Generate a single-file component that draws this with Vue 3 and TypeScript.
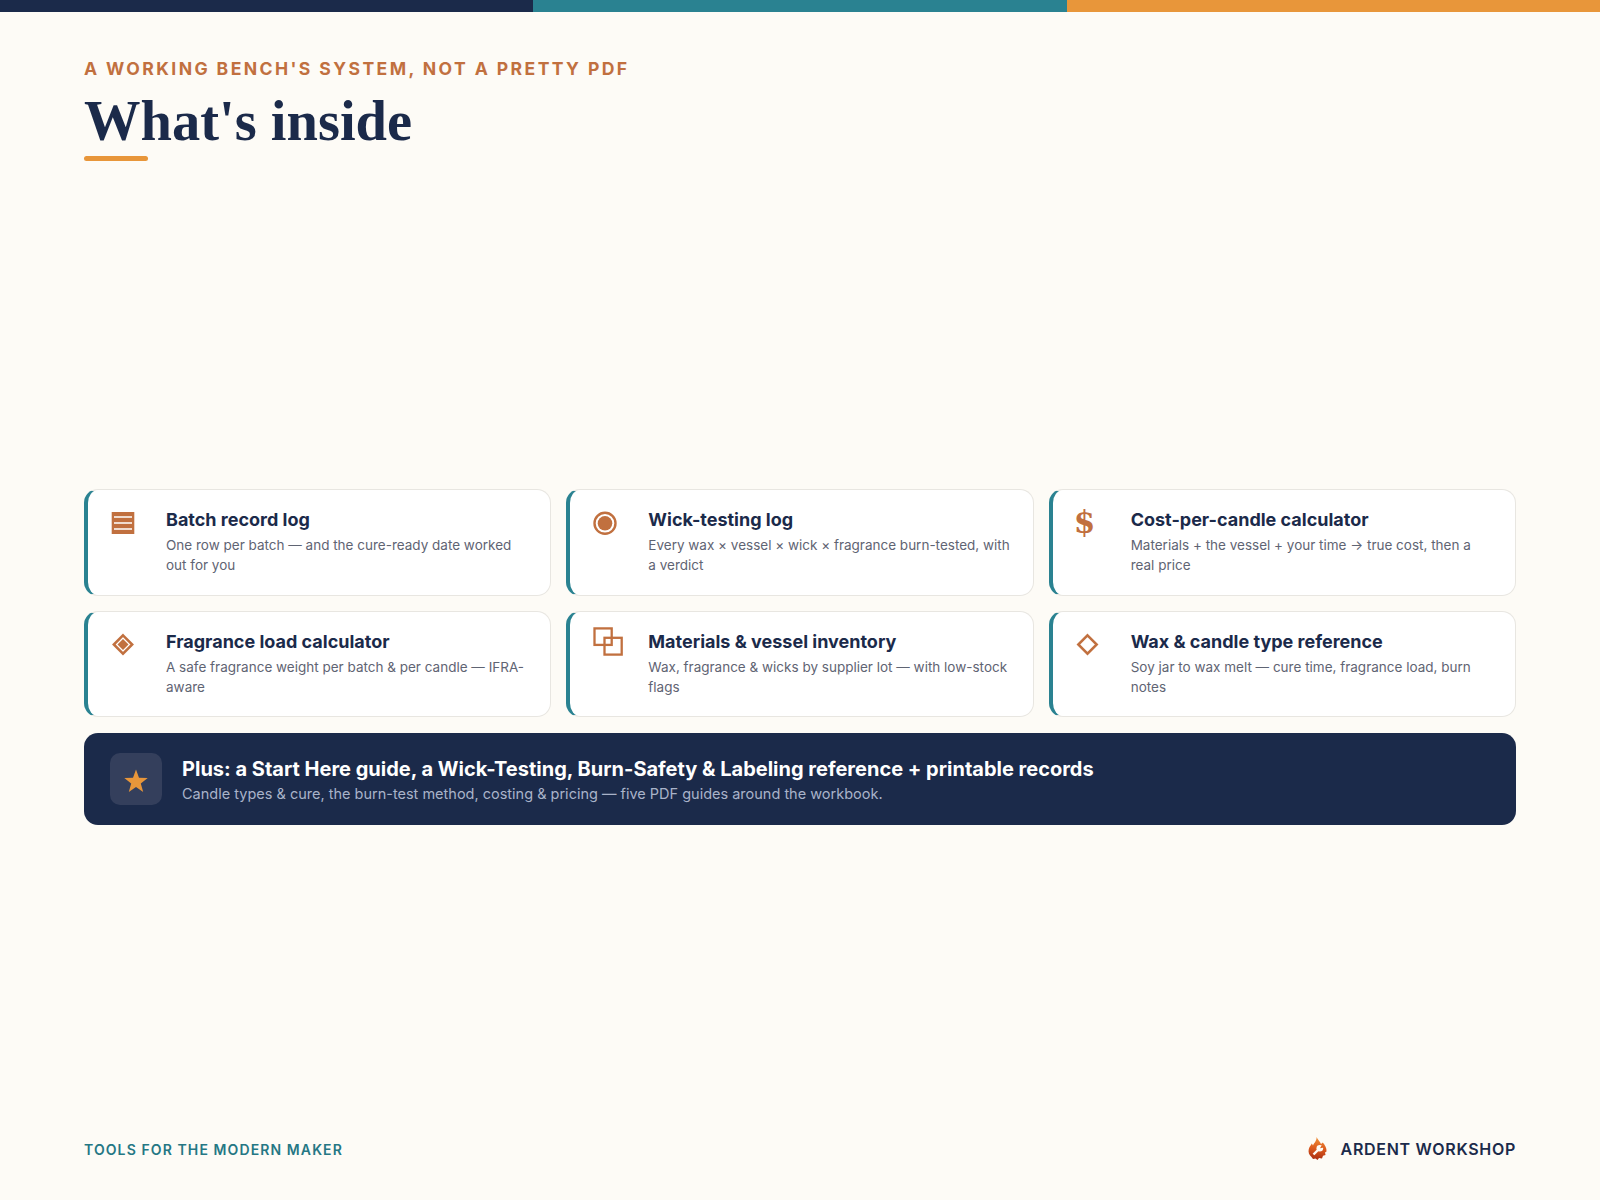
<script setup lang="ts">
interface Feature {
  icon: string
  title: string
  desc: string
}

const features: Feature[] = [
  { icon: 'rows', title: 'Batch record log', desc: 'One row per batch — and the cure-ready date worked out for you' },
  { icon: 'target', title: 'Wick-testing log', desc: 'Every wax × vessel × wick × fragrance burn-tested, with a verdict' },
  { icon: 'dollar', title: 'Cost-per-candle calculator', desc: 'Materials + the vessel + your time → true cost, then a real price' },
  { icon: 'gem', title: 'Fragrance load calculator', desc: 'A safe fragrance weight per batch & per candle — IFRA-aware' },
  { icon: 'squares', title: 'Materials & vessel inventory', desc: 'Wax, fragrance & wicks by supplier lot — with low-stock flags' },
  { icon: 'diamond', title: 'Wax & candle type reference', desc: 'Soy jar to wax melt — cure time, fragrance load, burn notes' },
]
</script>

<template>
  <div class="page">
    <div class="stripe">
      <span class="navy"></span>
      <span class="teal"></span>
      <span class="orange"></span>
    </div>

    <header class="head">
      <p class="eyebrow">A WORKING BENCH'S SYSTEM, NOT A PRETTY PDF</p>
      <h1 class="title">What's inside</h1>
      <div class="rule"></div>
    </header>

    <main class="body">
      <div class="grid">
        <div v-for="f in features" :key="f.title" class="card">
          <div class="icon">
            <span v-if="f.icon === 'dollar'" class="dollar">$</span>
            <svg v-else viewBox="0 0 34 34" width="34" height="34" class="icon-svg">
              <g v-if="f.icon === 'rows'">
                <rect x="1.700" y="8" width="22.600" height="22" fill="#c1703f" />
                <path d="M4 13h18M4 19h18M4 25h18" stroke="#fff" stroke-width="1.500" />
              </g>
              <g v-else-if="f.icon === 'target'">
                <circle cx="13" cy="19.300" r="10.500" fill="none" stroke="#c1703f" stroke-width="2.400" />
                <circle cx="13" cy="19.300" r="7.300" fill="#c1703f" />
              </g>
              <g v-else-if="f.icon === 'gem'">
                <path d="M13 9.300 22.200 18.500 13 27.700 3.800 18.500Z" fill="none" stroke="#c1703f" stroke-width="2.500" />
                <path d="M13 13 18.500 18.500 13 24 7.500 18.500Z" fill="#c1703f" />
              </g>
              <g v-else-if="f.icon === 'squares'" fill="none" stroke="#c1703f" stroke-width="2.300">
                <rect x="2.500" y="2.400" width="17.200" height="16.500" />
                <rect x="12.500" y="11.800" width="17.200" height="16.800" />
              </g>
              <path
                v-else
                d="M12.500 9.300 21.700 18.500 12.500 27.700 3.300 18.500Z"
                fill="none"
                stroke="#c1703f"
                stroke-width="2.500"
              />
            </svg>
          </div>
          <div>
            <h3 class="card-title">{{ f.title }}</h3>
            <p class="card-desc">{{ f.desc }}</p>
          </div>
        </div>
      </div>

      <div class="plus">
        <div class="plus-icon">
          <svg viewBox="0 0 24 24" width="24" height="24">
            <path fill="#e8963a" d="M12 .5 15 8.800 23.700 9 16.800 14.400 19.200 23 12 18 4.800 23 7.200 14.400.3 9 9 8.800Z" />
          </svg>
        </div>
        <div class="plus-text">
          <div class="plus-title">Plus: a Start Here guide, a Wick-Testing, Burn-Safety &amp; Labeling reference + printable records</div>
          <div class="plus-desc">Candle types &amp; cure, the burn-test method, costing &amp; pricing — five PDF guides around the workbook.</div>
        </div>
      </div>
    </main>

    <footer class="foot">
      <span class="tagline">TOOLS FOR THE MODERN MAKER</span>
      <span class="brand">
        <svg class="logo" viewBox="0 0 19 23" width="19" height="23">
          <defs>
            <linearGradient id="flame" x1="0.500" y1="0" x2="0.400" y2="1">
              <stop offset="0" stop-color="#f0923a" />
              <stop offset="0.500" stop-color="#dc5a1e" />
              <stop offset="1" stop-color="#a82c12" />
            </linearGradient>
          </defs>
          <path
            fill="url(#flame)"
            d="M8.500 0C10 3 12 4.500 13 7L14.800 5.500C17 8 18.800 11 18.500 14.500L17 15.500 17.500 18 15 18.800 14 21.500 11 21 9.500 23 7.500 21.500 5 22 3.500 20C1 18 0 15 .8 12 1.500 9.500 3 8.500 3.800 6.500L5 8.500C6 6 9 3.500 8.500 0Z"
          />
          <path d="M5.500 17.500 10.500 12.500" stroke="#fdfbf6" stroke-width="2.400" fill="none" />
          <circle cx="11.800" cy="11.200" r="3.300" fill="#fdfbf6" />
          <path d="M12 11.200 14 7.800 16 10.500Z" fill="#e0641f" />
        </svg>
        ARDENT WORKSHOP
      </span>
    </footer>
  </div>
</template>

<style>
html, body { margin: 0; background: #fdfbf6; }
</style>

<style scoped>
.page {
  height: 1200px;
  display: flex;
  flex-direction: column;
  background: #fdfbf6;
  font-family: Inter, "Liberation Sans", sans-serif;
  box-sizing: border-box;
}

.stripe { display: flex; height: 12px; flex-shrink: 0; }
.stripe span { flex: 1; }
.navy { background: #1b2a4a; }
.teal { background: #2a8291; }
.orange { background: #e8963a; }

.head { padding: 44px 84px 0; }
.eyebrow {
  margin: 0;
  font-size: 17.600px;
  line-height: 26px;
  font-weight: 700;
  letter-spacing: 2.400px;
  color: #c1703f;
}
.title {
  margin: 5px 0 0;
  font-family: "Liberation Serif", serif;
  font-size: 56.500px;
  line-height: 68px;
  font-weight: 700;
  color: #1b2a4a;
}
.rule {
  width: 64px;
  height: 5px;
  margin-top: 1px;
  border-radius: 3px;
  background: #e8963a;
}

.body {
  flex: 1;
  padding: 16px 84px 0;
  display: flex;
  flex-direction: column;
  justify-content: center;
  gap: 16px;
}

.grid {
  display: grid;
  grid-template-columns: repeat(3, 1fr);
  grid-template-rows: 107px 106px;
  gap: 15px;
}
.card {
  display: flex;
  gap: 12px;
  padding: 18px 22px 0;
  background: #fff;
  border: 1px solid #e8e6e1;
  border-left: 4px solid #2a8291;
  border-radius: 14px;
}
.icon {
  width: 44px;
  flex-shrink: 0;
  color: #c1703f;
}
.icon-svg {
  display: block;
  margin-top: -4px;
  overflow: visible;
}
.dollar {
  display: block;
  margin: -1px 0 0 -1px;
  font-family: "DejaVu Serif", serif;
  font-size: 31px;
  line-height: 30px;
  font-weight: 700;
}
.card-title {
  margin: 0;
  font-size: 18px;
  line-height: 24px;
  font-weight: 700;
  color: #1b2a4a;
}
.card-desc {
  margin: 3px 0 0;
  font-size: 13.500px;
  line-height: 20px;
  color: #5f6473;
}

.plus {
  display: flex;
  align-items: center;
  gap: 20px;
  height: 92px;
  padding: 0 26px;
  box-sizing: border-box;
  background: #1b2a4a;
  border-radius: 14px;
}
.plus-icon {
  width: 52px;
  height: 52px;
  padding-top: 4px;
  box-sizing: border-box;
  border-radius: 10px;
  display: flex;
  align-items: center;
  justify-content: center;
  background: #343f5c;
}
.plus-text { padding-top: 2px; }
.plus-title { font-size: 20px; line-height: 26px; font-weight: 700; color: #fff; }
.plus-desc { margin-top: 1px; font-size: 14.500px; line-height: 22px; color: #a9b3c9; }

.foot {
  display: flex;
  justify-content: space-between;
  align-items: center;
  padding: 0 84px 38px;
}
.tagline {
  font-size: 14px;
  font-weight: 600;
  letter-spacing: 1.100px;
  color: #257784;
}
.brand {
  display: flex;
  align-items: center;
  gap: 14px;
  margin-bottom: 2px;
  font-size: 16px;
  font-weight: 600;
  letter-spacing: 0.700px;
  color: #1b2a4a;
}
</style>
